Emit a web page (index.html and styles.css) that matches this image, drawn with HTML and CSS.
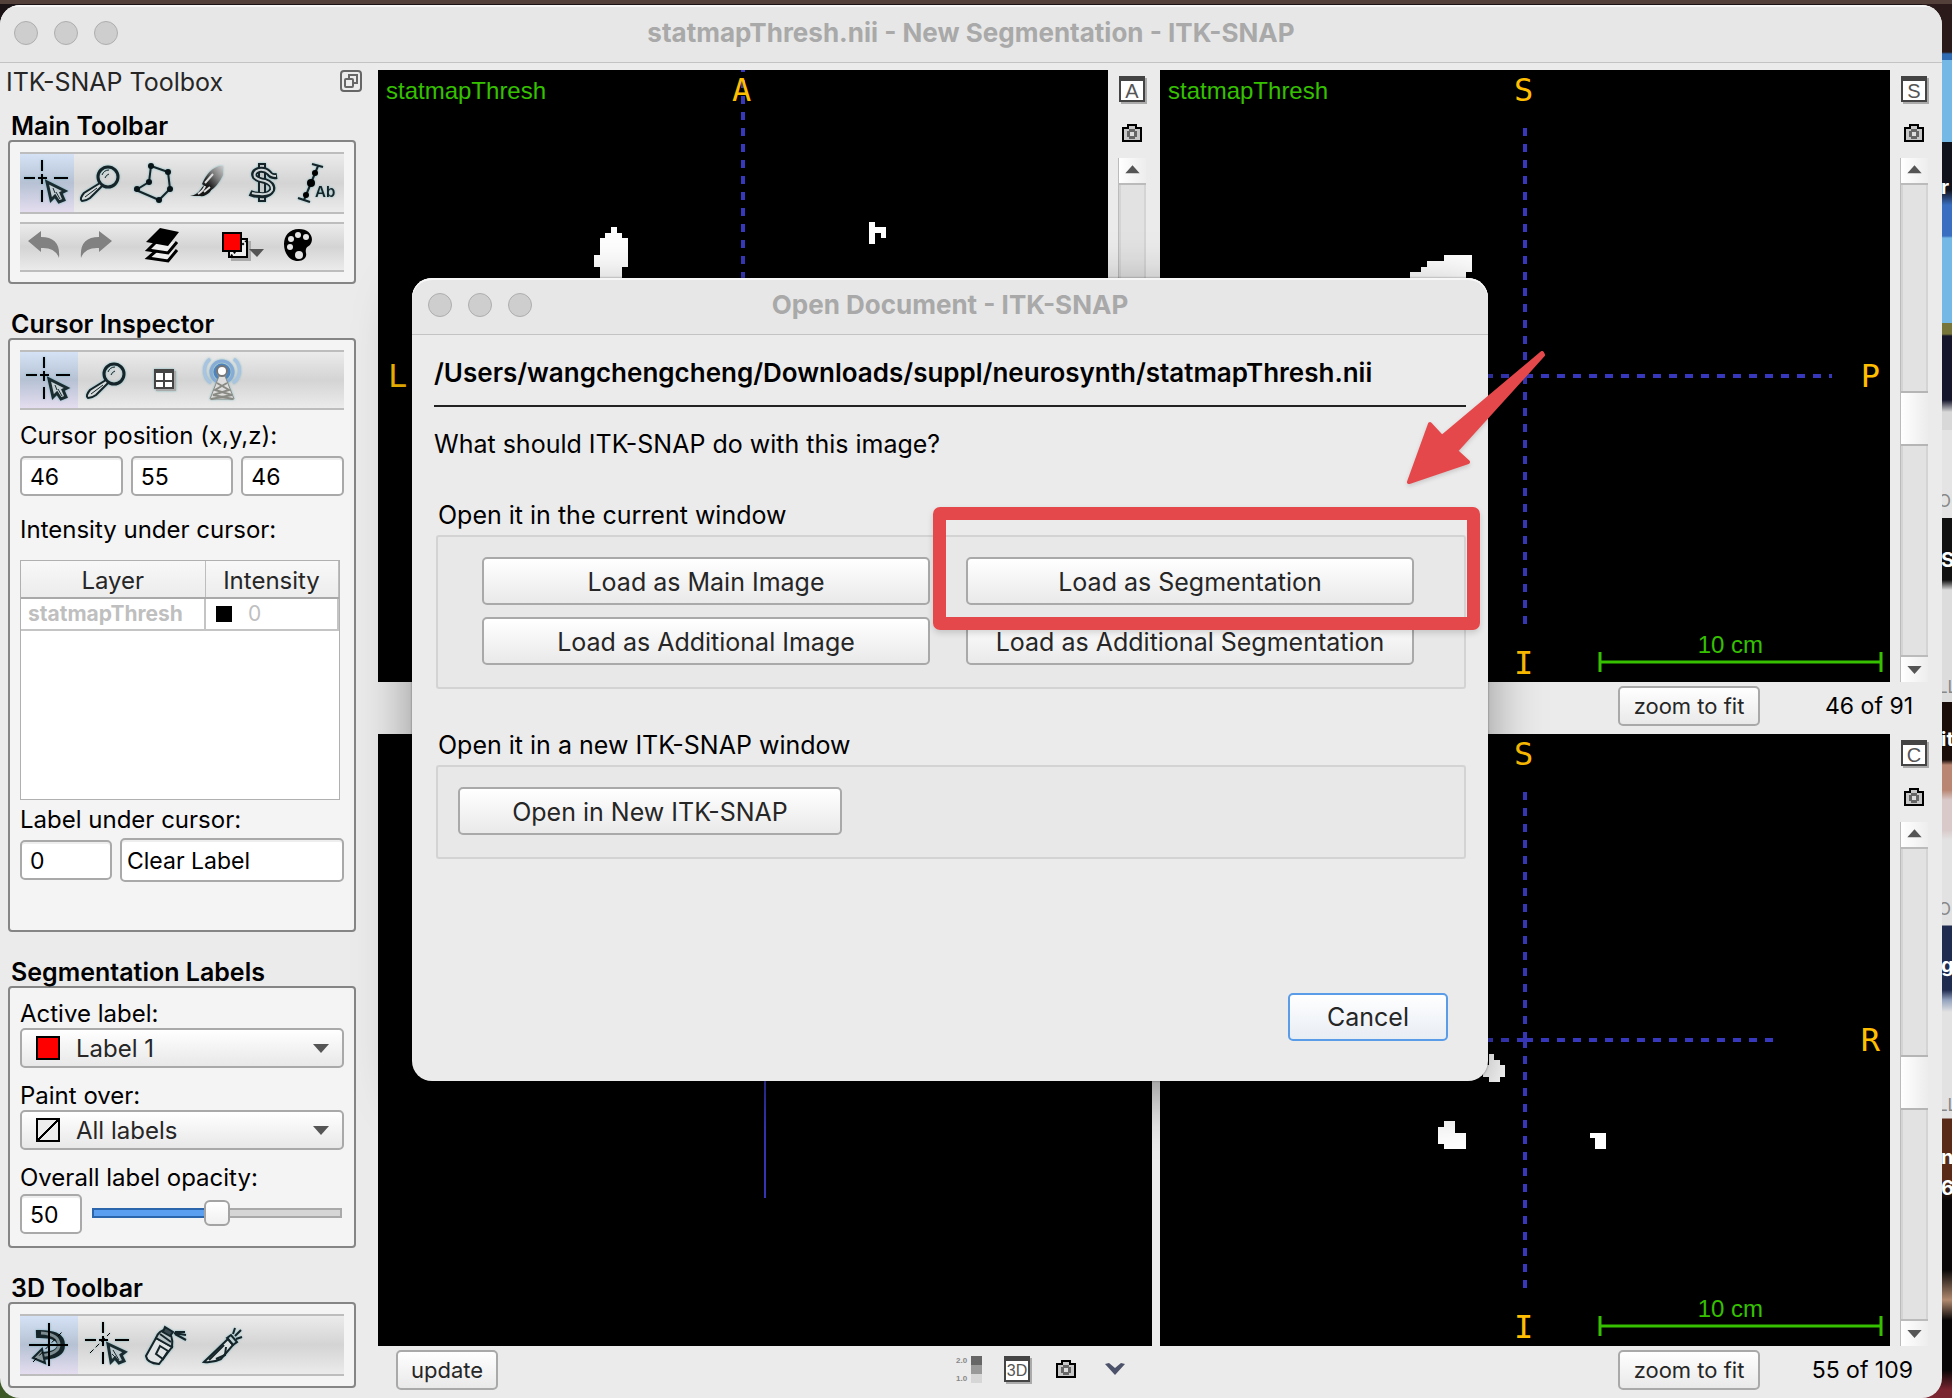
FILE: index.html
```html
<!DOCTYPE html>
<html lang="en">
<head>
<meta charset="utf-8">
<title>statmapThresh.nii - New Segmentation - ITK-SNAP</title>
<link rel="stylesheet" href="styles.css">
</head>
<body>
<svg class="defs" aria-hidden="true">
  <symbol id="i-cross" viewBox="0 0 48 48">
    <path d="M1 19h11M15 19h9M31 19h14M19 1v11M19 15v10M19 31v12" stroke="#000" stroke-width="2" fill="none"/>
    <path d="M24 23l4 18 4-4 4 6 5-2-3-7 4-2z" fill="#c3ced4" stroke="#1a2c30" stroke-width="3"/>
    <path d="M30 29l2 5M33 33l4 7" stroke="#1a2c30" fill="none"/>
  </symbol>
  <symbol id="i-zoom" viewBox="0 0 48 48">
    <circle cx="31" cy="18" r="10" fill="none" stroke="#142428" stroke-width="3"/>
    <path d="M25 16q2-5 7-5M28 19q1-3 4-4" fill="none" stroke="#142428" stroke-width="1"/>
    <path d="M23 24L7 34q-5 6-2 8 4 0 8-3l12-12z" fill="#d5dadb" stroke="#142428" stroke-width="2"/>
    <path d="M20 29L8 38" stroke="#142428" fill="none"/>
  </symbol>
  <symbol id="i-poly" viewBox="0 0 48 48">
    <path d="M20 7l17 6 2 17-11 11L5 31l13-8z" fill="none" stroke="#142428" stroke-width="2"/>
    <g fill="#081418"><circle cx="20" cy="7" r="3"/><circle cx="37" cy="13" r="3"/><circle cx="39" cy="30" r="3"/><circle cx="28" cy="41" r="3"/><circle cx="6" cy="30" r="3"/><circle cx="18" cy="23" r="3"/></g>
  </symbol>
  <symbol id="i-brush" viewBox="0 0 48 48">
    <defs><linearGradient id="hair" x1="0" y1="1" x2="1" y2="0"><stop offset=".3" stop-color="#222"/><stop offset=".6" stop-color="#777"/><stop offset="1" stop-color="#ccc"/></linearGradient></defs>
    <path d="M17 25Q24 9 35 7h3v9Q33 27 25 32z" fill="url(#hair)"/>
    <path d="M5 37q7-1 11-7 3-5 8-4 4 3 1 7-5 5-10 4z" fill="#161616"/>
    <path d="M13 35q6-4 7-8M19 33l6-5M20 24l8-9" stroke="#ddd" stroke-width="2" fill="none"/>
  </symbol>
  <symbol id="i-snake" viewBox="0 0 48 48">
    <path d="M20 5h6v37h-6z" fill="#c4c9ca" stroke="#142428" stroke-width="2"/>
    <path d="M38 17q-6 1-8-3-4-4-10-3-7 2-4 7 3 3 10 4 9 3 7 9-3 6-12 5-6 0-10-2" fill="none" stroke="#142428" stroke-width="6"/>
    <path d="M37 17q-5 0-7-3-4-4-10-3-6 2-4 7 3 3 10 4 8 3 7 9-3 5-12 4-5 0-8-1" fill="none" stroke="#cfd6d7" stroke-width="2"/>
  </symbol>
  <symbol id="i-ruler" viewBox="0 0 48 48">
    <path d="M19 5l11 3M5 39l12 4M25 7L11 41" stroke="#142428" stroke-width="2" fill="none"/>
    <circle cx="22" cy="14" r="3"/><circle cx="18" cy="24" r="4"/><circle cx="13" cy="36" r="3"/>
    <text x="22" y="38" font-family="Inter, sans-serif" font-size="15" font-weight="600" fill="#142428">Ab</text>
  </symbol>
  <symbol id="i-undo" viewBox="0 0 48 48"><path d="M7 18L20 8v6q20 0 18 21-4-11-18-10v4z" fill="#818181"/></symbol>
  <symbol id="i-layers" viewBox="0 0 48 48">
    <path d="M17 28l-8 7 20 3 9-11" fill="#eee" stroke="#000" stroke-width="3"/>
    <path d="M17 19l-8 8 20 3 9-11" fill="#eee" stroke="#000" stroke-width="3"/>
    <path d="M21 5l19 4-11 14-22-4z" fill="#000"/>
  </symbol>
  <symbol id="i-label" viewBox="0 0 48 48">
    <path d="M12 18h20v20H12z" fill="#aaa"/><path d="M10 16h18v18H10z" fill="#eee" stroke="#000" stroke-width="2"/>
    <path d="M12 33L27 18" stroke="#000" stroke-width="2" stroke-dasharray="2 2"/>
    <path d="M4 10h18v18H4z" fill="#f00" stroke="#000" stroke-width="2"/><path d="M30 26h15l-7 8z" fill="#555"/>
  </symbol>
  <symbol id="i-palette" viewBox="0 0 48 48">
    <path d="M24 6C14 6 9 13 9 21c0 10 6 17 14 17 6 0 9-4 8-8-1-5 1-6 4-8 5-7 0-16-11-16z" fill="#000"/>
    <g fill="#e4e4e4"><circle cx="23" cy="12" r="3"/><circle cx="31" cy="14" r="3"/><circle cx="16" cy="16" r="3"/><circle cx="15" cy="24" r="3"/><circle cx="24" cy="32" r="4"/></g>
  </symbol>
  <symbol id="i-grid" viewBox="0 0 48 48">
    <path d="M15 15h20v20H15z" fill="#aaa"/><path d="M14 14h18v18H14z" fill="#fff" stroke="#444" stroke-width="2"/><path d="M13 14h20v3H13zM22 17h2v15h-2zM14 24h18v2H14z" fill="#444"/>
  </symbol>
  <symbol id="i-antenna" viewBox="0 0 48 48">
    <g fill="none" stroke-width="3"><circle cx="23" cy="16" r="7" stroke="#4f83bd"/><circle cx="23" cy="16" r="11" stroke="#86abd6"/><path d="M12 27a15 15 0 0 1-1-24M34 27a15 15 0 0 0 1-24" stroke="#a9c3e2"/></g>
    <path d="M20 20h6l9 23H11z" fill="#ddd" stroke="#8a8a84" stroke-width="1"/>
    <path d="M18 27l12 7-16 5 20 4M28 27l-12 7 17 5-21 4" stroke="#8a8a84" stroke-width="2" fill="none"/>
    <circle cx="23" cy="15" r="5" fill="#fff" stroke="#777" stroke-width="2"/>
  </symbol>
  <symbol id="i-rotate" viewBox="0 0 48 48">
    <path d="M11 13q25-1 25 11 0 11-22 11" fill="none" stroke="#142428" stroke-width="8"/>
    <path d="M16 12q18 1 18 12 0 9-20 11" fill="none" stroke="#7b8b90" stroke-width="3"/>
    <path d="M17 28L8 37l12 5z" fill="#8b989c" stroke="#142428" stroke-width="2"/>
    <path d="M4 24h39M24 2v43" stroke="#000" stroke-width="2"/><path d="M8 41L37 11" stroke="#000" stroke-dasharray="5 4"/>
  </symbol>
  <symbol id="i-cross3d" viewBox="0 0 48 48">
    <path d="M2 19h11M16 19h9M32 19h14M20 1v11M20 15v10M20 31v12" stroke="#000" stroke-width="2"/>
    <path d="M7 32L27 12" stroke="#000" stroke-dasharray="5 3"/>
    <path d="M25 23l3 18 4-4 4 5 5-2-3-6 4-3z" fill="#b9c6ca" stroke="#1a2c30" stroke-width="3"/>
    <path d="M30 29l6 10M29 33l3 3" stroke="#1a2c30"/>
  </symbol>
  <symbol id="i-spray" viewBox="0 0 48 48">
    <path d="M15 17L5 35q1 7 13 8l13-17z" fill="#e0e4e4" stroke="#142428" stroke-width="2"/>
    <path d="M15 17q3-8 10-8 8 5 6 17z" fill="#b8c4c6" stroke="#142428" stroke-width="2"/>
    <path d="M19 25l8 5-5 8-7-5zM19 13l11 8" fill="none" stroke="#142428" stroke-width="2"/>
    <path d="M24 6l8 5-3 4-7-4zM33 12l12 2M34 13l11 6M34 11l10 0" fill="#384a50" stroke="#142428" stroke-width="2"/>
  </symbol>
  <symbol id="i-scalpel" viewBox="0 0 48 48">
    <path d="M5 41L29 18l5 6-12 14q-8 4-17 3z" fill="#dbe0e0" stroke="#142428" stroke-width="2"/>
    <path d="M10 39l15-15M17 38l9-4 1-8M28 17l4-3 6 7-4 3zM34 13l2-6M36 15l6-6M37 18l6-2" fill="none" stroke="#142428" stroke-width="2"/>
  </symbol>
  <symbol id="i-camera" viewBox="0 0 20 18">
    <path d="M1 4h5V1h8v3h5v13H1z" fill="#c8c8c8" stroke="#000" stroke-width="2"/><path d="M7 5h6v2h2v6h-2v2H7v-2H5V7h2z" fill="#666"/><path d="M8 8h4v4H8z" fill="#ddd"/>
  </symbol>
  <symbol id="i-up" viewBox="0 0 28 28"><path d="M6 17h16l-8-9z" fill="#555"/></symbol>
  <symbol id="i-down" viewBox="0 0 28 28"><path d="M6 10h16l-8 9z" fill="#555"/></symbol>
</svg>

<div class="desktop" aria-hidden="true">
  <span class="d1">r</span><span class="d2">OI</span><span class="d3">S</span><span class="d2 d4">LL</span><span class="d1 d5">it</span><span class="d2 d6">O</span><span class="d1 d7">g</span><span class="d2 d8">LL</span><span class="d1 d9">n</span><span class="d1 d10">6</span>
</div>

<main class="window">
  <header class="titlebar">
    <div class="lights"><i></i><i></i><i></i></div>
    <h1>statmapThresh.nii - New Segmentation - ITK-SNAP</h1>
  </header>
  <div class="body">
    <aside class="sidebar">
      <div class="dock">
        <span>ITK-SNAP Toolbox</span>
        <button class="plain" aria-label="Float"><svg width="22" height="22" viewBox="0 0 22 22" fill="none" stroke="#666" stroke-width="2"><rect x="1" y="1" width="20" height="20" rx="3"/><rect x="5" y="9" width="8" height="8" rx="1"/><path d="M9 8V5h8v8h-3"/></svg></button>
      </div>

      <h2>Main Toolbar</h2>
      <section class="box">
        <div class="toolbar main">
          <button class="on" aria-label="Crosshair"><svg><use href="#i-cross"/></svg></button>
          <button aria-label="Zoom"><svg><use href="#i-zoom"/></svg></button>
          <button aria-label="Polygon"><svg><use href="#i-poly"/></svg></button>
          <button aria-label="Paintbrush"><svg><use href="#i-brush"/></svg></button>
          <button aria-label="Snake"><svg><use href="#i-snake"/></svg></button>
          <button aria-label="Annotation"><svg><use href="#i-ruler"/></svg></button>
        </div>
        <div class="toolbar low">
          <button aria-label="Undo"><svg><use href="#i-undo"/></svg></button>
          <button aria-label="Redo"><svg class="flip"><use href="#i-undo"/></svg></button>
          <button class="sep" aria-label="Layers"><svg><use href="#i-layers"/></svg></button>
          <button class="sep wide" aria-label="Label"><svg><use href="#i-label"/></svg></button>
          <button aria-label="Colours"><svg><use href="#i-palette"/></svg></button>
        </div>
      </section>

      <h2>Cursor Inspector</h2>
      <section class="box inspector">
        <div class="toolbar">
          <button class="on" aria-label="Cursor"><svg><use href="#i-cross"/></svg></button>
          <button aria-label="Zoom"><svg><use href="#i-zoom"/></svg></button>
          <button aria-label="Layout"><svg><use href="#i-grid"/></svg></button>
          <button aria-label="Sync"><svg><use href="#i-antenna"/></svg></button>
        </div>
        <label class="gap10" for="cx">Cursor position (x,y,z):</label>
        <div class="coords">
          <input id="cx" value="46"><input aria-label="y" value="55"><input aria-label="z" value="46">
        </div>
        <p class="gap18">Intensity under cursor:</p>
        <div class="tablebox">
          <table>
            <thead><tr><th>Layer</th><th>Intensity</th></tr></thead>
            <tbody><tr><td class="name">statmapThresh</td><td><span class="val"><i class="chip"></i>0</span></td></tr></tbody>
          </table>
        </div>
        <label for="lid" class="gap4">Label under cursor:</label>
        <div class="labelrow"><input id="lid" value="0"><input class="tall" aria-label="Label name" value="Clear Label"></div>
      </section>

      <h2>Segmentation Labels</h2>
      <section class="box labels">
        <label for="al">Active label:</label>
        <div class="select"><i class="swatch red"></i><select id="al"><option>Label 1</option></select><svg><use href="#i-down"/></svg></div>
        <label for="po" class="gap12">Paint over:</label>
        <div class="select"><i class="swatch hatch"></i><select id="po"><option>All labels</option></select><svg><use href="#i-down"/></svg></div>
        <label for="op" class="gap12">Overall label opacity:</label>
        <div class="opacity"><input id="op" value="50"><input type="range" aria-label="Opacity" min="0" max="100" value="50"></div>
      </section>

      <h2>3D Toolbar</h2>
      <section class="box">
        <div class="toolbar main3d">
          <button class="on" aria-label="Rotate"><svg><use href="#i-rotate"/></svg></button>
          <button aria-label="3D cursor"><svg><use href="#i-cross3d"/></svg></button>
          <button aria-label="Spray"><svg><use href="#i-spray"/></svg></button>
          <button aria-label="Scalpel"><svg><use href="#i-scalpel"/></svg></button>
        </div>
      </section>
    </aside>

    <div class="views">
      <section class="panel">
        <div class="view">
          <svg viewBox="0 0 730 612"><path class="dash" d="M365-6V306"/><path class="blob" d="M233 157h6v6h5v5h6v29h-6v20h-22v-20h-6v-12h6v-17h5v-5h6zM491 152h6v5h11v11h-5v-5h-6v11h-6z"/></svg>
          <span class="vname">statmapThresh</span><b class="o top">A</b><b class="o left">L</b>
        </div>
        <div class="side">
          <button class="letter" aria-label="Expand axial"><span>A</span></button>
          <button class="cam" aria-label="Screenshot"><svg><use href="#i-camera"/></svg></button>
          <div class="scroll"><svg><use href="#i-up"/></svg><div class="track"><i></i></div><svg><use href="#i-down"/></svg></div>
        </div>
        <div class="foot"></div>
      </section>

      <section class="panel">
        <div class="view">
          <svg viewBox="0 0 730 612"><path class="dash" d="M365 58V306M365 306V554M117 306H365M365 306H672"/><path class="blob" d="M284 185h28v17h-6v20h-56v-20h11v-5h6v-6h17z"/><path class="scale" d="M439 592H721M440 582v20M721 582v20"/></svg>
          <span class="vname">statmapThresh</span><b class="o top">S</b><b class="o right">P</b><b class="o bottom">I</b><span class="cm">10 cm</span>
        </div>
        <div class="side">
          <button class="letter" aria-label="Expand sagittal"><span>S</span></button>
          <button class="cam" aria-label="Screenshot"><svg><use href="#i-camera"/></svg></button>
          <div class="scroll"><svg><use href="#i-up"/></svg><div class="track"><i></i></div><svg><use href="#i-down"/></svg></div>
        </div>
        <div class="foot"><button class="btn fit">zoom to fit</button><span class="count">46 of 91</span></div>
      </section>

      <section class="panel three">
        <div class="view"><svg viewBox="0 0 774 612"><path d="M387 0V464" stroke="#3434b4" stroke-width="2"/></svg></div>
        <div class="foot">
          <button class="btn update">update</button>
          <div class="tools">
            <button class="plain" aria-label="Color bar"><svg width="26" height="28" viewBox="0 0 26 28"><path d="M15 1h11v9H15z" fill="#666"/><path d="M15 10h11v9H15z" fill="#999"/><path d="M15 19h11v9H15z" fill="#d6d6d6"/><g font-family="Liberation Sans, sans-serif" font-size="8" font-weight="700" fill="#888"><text x="0" y="8">2.0</text><text x="0" y="26">1.0</text></g></svg></button>
            <button class="letter" aria-label="Expand 3D"><span>3D</span></button>
            <button class="cam" aria-label="Screenshot"><svg><use href="#i-camera"/></svg></button>
            <button class="plain" aria-label="More"><svg width="22" height="14" viewBox="0 0 22 14"><path d="M1 2l4-1 6 5 6-5 4 1-10 11z" fill="#4d526b"/></svg></button>
          </div>
        </div>
      </section>

      <section class="panel">
        <div class="view">
          <svg viewBox="0 0 730 612"><path class="dash" d="M365 58V306M365 306V554M117 306H365M365 306H613"/><path class="blob" d="M329 320h5v6h6v5h5v12h-5v5h-11v-5h-6v-12h6zM284 387h11v12h11v16h-22v-5h-6v-17h6zM430 399h16v16h-11v-11h-5z"/><path class="scale" d="M439 592H721M440 582v20M721 582v20"/></svg>
          <b class="o top">S</b><b class="o right">R</b><b class="o bottom">I</b><span class="cm">10 cm</span>
        </div>
        <div class="side">
          <button class="letter" aria-label="Expand coronal"><span>C</span></button>
          <button class="cam" aria-label="Screenshot"><svg><use href="#i-camera"/></svg></button>
          <div class="scroll"><svg><use href="#i-up"/></svg><div class="track"><i></i></div><svg><use href="#i-down"/></svg></div>
        </div>
        <div class="foot"><button class="btn fit">zoom to fit</button><span class="count">55 of 109</span></div>
      </section>
    </div>
  </div>
</main>

<div class="dialog" role="dialog" aria-label="Open Document">
  <header class="titlebar">
    <div class="lights"><i></i><i></i><i></i></div>
    <h1>Open Document - ITK-SNAP</h1>
  </header>
  <div class="content">
    <h3>/Users/wangchengcheng/Downloads/suppl/neurosynth/statmapThresh.nii</h3>
    <p class="ask">What should ITK-SNAP do with this image?</p>
    <p class="caption">Open it in the current window</p>
    <div class="group grid">
      <button class="btn">Load as Main Image</button><button class="btn">Load as Segmentation</button>
      <button class="btn">Load as Additional Image</button><button class="btn">Load as Additional Segmentation</button>
    </div>
    <p class="caption">Open it in a new ITK-SNAP window</p>
    <div class="group single"><button class="btn">Open in New ITK-SNAP</button></div>
    <div class="actions"><button class="btn default">Cancel</button></div>
  </div>
  <div class="mark"></div>
  <svg class="arrow" width="146" height="144" viewBox="0 0 146 144"><path d="M139 5L39 89 27 76 6 134 65 114 53 103 140 7z" fill="#e5484b" stroke="#e5484b" stroke-width="4" stroke-linejoin="round"/></svg>
</div>
</body>
</html>
```
FILE: styles.css
```css
* { box-sizing: border-box; }
body { margin: 0; min-height: 100vh; position: relative; overflow: hidden; font: 24px/30px Inter, sans-serif; color: #000;
  background: linear-gradient(#54403a 4px, #1a1214 4px, #1a1214 50%, #3d5a26 50%); }
h1, h2, h3, p { margin: 0; font-size: inherit; }
button, input, select { font: inherit; color: inherit; margin: 0; }
.defs { position: absolute; width: 0; height: 0; }
.plain, .cam, .toolbar button { border: 0; padding: 0; background: none; display: flex; align-items: center; justify-content: center; }

/* desktop behind the window */
.desktop { position: absolute; top: 0; right: 0; bottom: 0; width: 30px; overflow: hidden;
  background: linear-gradient(#54403a 4px, #2a1a1a 4px 52px, #2f6cb4 54px 60px, #74b8e6 60px 142px, #10121c 142px 190px, #3a6ec0 205px 236px, #74b8e6 238px 323px, #77763a 323px 334px, #15162c 336px 400px, #d8d8d8 412px 430px, #e4e4e4 430px 518px, #111 518px 580px, #dcdcdc 590px 702px, #1a0d0a 702px 760px, #b88672 765px 790px, #d9c9c9 800px 830px, #e2e2e2 840px 925px, #202b50 926px 990px, #93a2bd 1000px, #e2e2e2 1012px 1118px, #5a2a18 1119px 1180px, #0a0808 1200px 1270px, #b28a70 1300px, #080606 1320px 1370px, #7a2530 1390px); }
.desktop span { position: absolute; left: 19px; color: #fff; font-weight: 700; top: 172px; font-size: 20px; }
.desktop .d2 { color: #888; font-weight: 400; font-size: 17px; left: 16px; top: 486px; }
.desktop .d3 { top: 545px; }
.desktop .d4 { top: 672px; }
.desktop .d5 { top: 724px; }
.desktop .d6 { top: 894px; }
.desktop .d7 { top: 950px; }
.desktop .d8 { top: 1090px; }
.desktop .d9 { top: 1142px; }
.desktop .d10 { top: 1173px; }

/* window frame */
.window { position: relative; margin: 5px 10px 0 0; min-height: calc(100vh - 5px); display: flex; flex-direction: column;
  background: #ebebeb; border-radius: 20px; overflow: hidden; }
.titlebar { height: 58px; display: grid; grid-template-columns: 128px 1fr 128px; align-items: center; background: #e7e7e7; border-bottom: 1px solid #c3c3c3; box-shadow: inset 0 2px #f7f7f7; padding-bottom: 2px; }
.titlebar h1 { text-align: center; color: #a9a9a9; font-size: 26px; font-weight: 700; white-space: nowrap; }
.lights { display: flex; gap: 16px; padding-left: 14px; }
.lights i { width: 24px; height: 24px; border-radius: 50%; background: #cecece; border: 1px solid #aeaeae; }
.body { flex: 1; display: grid; grid-template-columns: 378px 1fr; }

/* toolbox */
.sidebar { padding: 3px 22px 8px 8px; }
.dock { display: flex; justify-content: space-between; align-items: center; height: 32px; margin: 0 -6px 12px 0; color: #262626; font-size: 25px; }
.dock span { margin-left: -2px; }
.dock button { margin-bottom: 2px; }
.sidebar h2 { padding: 1px 0 0 3px; height: 30px; font-size: 25px; font-weight: 600; }
.box + h2 { margin-top: 24px; }
.box { border: 2px solid #858585; border-radius: 4px; background: #f4f4f4; padding: 10px; }
.box label, .box p { display: block; position: relative; padding-top: 1px; height: 30px; }
.inspector { padding-bottom: 48px; }
.labels { padding-bottom: 12px; }
.toolbar { display: flex; height: 60px; border: solid #bdbdbd; border-width: 2px 0; background: linear-gradient(#ebebeb, #d4d4d4 50%, #ebebeb); }
.toolbar button { width: 58px; }
.toolbar svg { width: 48px; height: 48px; filter: drop-shadow(0 0 1px rgba(90, 170, 180, .7)); }
.toolbar .on { background: linear-gradient(#d5e2f5, #b6c2d4 50%, #e4ddef); }
.main, .main3d { height: 62px; }
.main button { width: 54px; }
.low { height: 50px; margin-top: 8px; }
.low button { width: 50px; }
.low svg { filter: none; }
.low .sep { margin-left: 18px; }
.low .wide { width: 62px; margin-left: 24px; }
.flip { transform: scaleX(-1); }
.gap4 { margin-top: 4px; }
.gap10 { margin-top: 10px; }
.gap12 { margin-top: 12px; }
.gap18 { margin-top: 18px; }
input:not([type=range]) { width: 100%; min-width: 0; height: 40px; padding: 2px 8px 0; border: 2px solid #a9a9a9; border-radius: 5px; background: #fff; box-shadow: inset 0 2px #eee; font-size: 23px; }
.coords { display: grid; grid-template-columns: repeat(3, 1fr); gap: 8px; margin-top: 6px; }
.tablebox { height: 240px; margin: 16px 4px 0 0; border: 1px solid #b0b0b0; background: #fff; }
table { width: 100%; border-collapse: collapse; table-layout: fixed; }
th { height: 37px; padding: 4px 0 0; font-weight: 400; color: #262626; background: linear-gradient(#f8f8f8, #ececec); border-bottom: 2px solid #a9a9a9; border-right: 1px solid #bdbdbd; line-height: 30px; }
th:first-child { width: 184px; }
td { height: 32px; padding: 0 0 0 7px; border-bottom: 2px solid #c4c4c4; border-right: 2px solid #c4c4c4; color: #bfbfbf; font-size: 21px; line-height: 28px; }
.name { font-weight: 700; }
.val { display: flex; align-items: center; gap: 16px; padding-left: 3px; }
.chip { width: 16px; height: 16px; background: #000; }
.labelrow { display: grid; grid-template-columns: 92px 1fr; gap: 8px; align-items: center; margin-top: 4px; }
.labelrow input.tall:not([type=range]) { height: 44px; padding-left: 5px; }
.select { position: relative; }
.select select { appearance: none; width: 100%; height: 40px; padding: 2px 50px 0 54px; border: 2px solid #a9a9a9; border-radius: 5px; background: linear-gradient(#fff, #e8e8e8); color: #262626; display: block; }
.select svg { position: absolute; right: 9px; top: 6px; width: 28px; height: 28px; pointer-events: none; }
.swatch { position: absolute; left: 16px; top: 8px; width: 24px; height: 24px; border: 2px solid #000; }
.red { background: #f00; }
.hatch { background: linear-gradient(135deg, #eee 47%, #000 47% 53%, #eee 53%); }
.opacity { display: grid; grid-template-columns: 62px 1fr; gap: 10px; margin: 2px 2px 0 0; align-items: center; }
input[type=range] { appearance: none; width: 100%; height: 26px; background: none; margin-bottom: 2px; }
input[type=range]::-webkit-slider-runnable-track { height: 10px; border: 2px solid #a9a9a9; border-radius: 3px; background: linear-gradient(90deg, #5b9ff0 50%, #d6d6d6 50%); border-image: linear-gradient(90deg, #2b66ad 50%, #a9a9a9 50%) 2; }
input[type=range]::-webkit-slider-thumb { appearance: none; width: 26px; height: 26px; margin-top: -10px; border: 2px solid #a3a3a3; border-radius: 6px; background: linear-gradient(#fff, #f0f0f0); }

/* image views */
.views { display: grid; grid-template-columns: 1fr 1fr; grid-template-rows: 1fr 1fr; padding-top: 7px; }
.panel { display: grid; grid-template: 1fr 52px / 1fr 52px; }
.three { grid-template-columns: 1fr 8px; }
.view { position: relative; background: #000; overflow: hidden; }
.view svg { position: absolute; width: 100%; height: 100%; }
.dash { fill: none; stroke: #3838bc; stroke-width: 4; stroke-dasharray: 8; }
.blob { fill: #fff; }
.scale { fill: none; stroke: #36c000; stroke-width: 3; }
.vname, .cm { position: absolute; color: #36c000; font-family: "Liberation Sans", sans-serif; line-height: 28px; }
.vname { left: 8px; top: 7px; }
.cm { right: 127px; bottom: 23px; }
.o { position: absolute; color: #ffbe00; font: 32px/40px "DejaVu Sans Mono", monospace; }
.top { left: calc(50% - 11px); top: 0; }
.bottom { left: calc(50% - 11px); bottom: -1px; }
.left { left: 10px; top: calc(50% - 20px); }
.right { right: 10px; top: calc(50% - 20px); }
.side { display: flex; flex-direction: column; align-items: center; padding: 6px 4px 0 0; }
.letter { width: 26px; height: 26px; padding: 0; border: 2px solid #444; border-top-width: 5px; background: #fff; box-shadow: 2px 2px #aaa; color: #555; display: flex; align-items: center; justify-content: center; font: 20px/18px "Liberation Sans", sans-serif; }
.cam { width: 20px; height: 18px; }
.cam svg { width: 20px; height: 18px; }
.side .cam { margin-top: 22px; }
.scroll { flex: 1; width: 28px; margin-top: 16px; display: flex; flex-direction: column; border-left: 1px solid #bbb; background: linear-gradient(90deg, #fff, #ededed); }
.scroll svg { width: 27px; height: 25px; }
.track { flex: 1; display: flex; align-items: center; padding-bottom: 4px; border: solid #bbb; border-width: 2px 0; background: #e2e2e2; box-shadow: inset 2px 0 #d4d4d4, inset -2px 0 #d4d4d4; }
.track i { width: 100%; height: 55px; border: solid #b5b5b5; border-width: 2px 0; background: linear-gradient(90deg, #fff, #ececec); }
.foot { grid-column: 1 / -1; display: flex; align-items: flex-start; justify-content: flex-end; padding: 4px 29px 0 18px; color: #000; }
.btn { height: 48px; padding: 0; border: 2px solid #a9a9a9; border-radius: 5px; background: linear-gradient(#fff, #e9e9e9); color: #262626; }
.foot .btn { height: 40px; font-size: 22px; }
.fit { width: 142px; }
.update { width: 102px; }
.count { width: 153px; text-align: right; line-height: 40px; font-size: 23px; }
.three .foot { justify-content: space-between; padding-right: 34px; }
.tools { display: flex; align-items: center; gap: 22px; height: 38px; }
.tools .cam { margin: 0 6px 0 4px; }
.tools .letter { font-size: 16px; }

/* dialog */
.dialog { position: absolute; left: 412px; top: 278px; width: 1076px; font-size: 25px; background: #ebebeb; border-radius: 20px; box-shadow: 0 0 2px rgba(0, 0, 0, .5), 0 16px 56px rgba(0, 0, 0, .4); }
.dialog .titlebar { height: 57px; border-radius: 20px 20px 0 0; }
.dialog .lights { padding-left: 16px; }
.content { padding: 18px 22px 40px; }
h3 { padding: 4px 0 16px; font-size: 26px; line-height: 32px; border-bottom: 2px solid #222; white-space: nowrap; font-weight: 600; }
.ask { margin-top: 22px; }
.caption { margin: 41px 0 5px 4px; }
.group { margin-left: 2px; border: 2px solid #d3d3d3; border-radius: 3px; background: #e8e8e8; }
.grid { display: grid; grid-template-columns: 1fr 1fr; gap: 12px 36px; padding: 20px 50px 22px 44px; }
.grid .btn, .single .btn { padding-top: 2px; }
.single { padding: 20px 20px 22px; }
.single .btn { width: 384px; display: block; }
.actions { display: flex; justify-content: flex-end; padding: 134px 18px 0 0; }
.default { width: 160px; border-color: #5a9ce8; background: linear-gradient(#fff, #e8edf4); }
.mark { position: absolute; left: 521px; top: 229px; width: 547px; height: 123px; border: 13px solid #e5484b; border-radius: 7px; box-shadow: 0 3px 6px rgba(0, 0, 0, .15); pointer-events: none; }
.arrow { position: absolute; left: 991px; top: 70px; pointer-events: none; filter: drop-shadow(0 2px 2px rgba(0, 0, 0, .15)); }
```
